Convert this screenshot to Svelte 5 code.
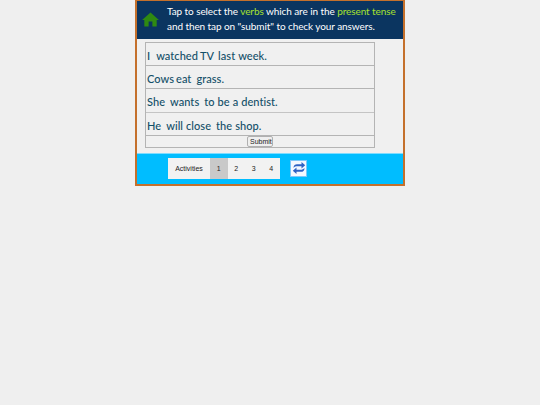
<script>
  const rows = [
    [['I', 6], ['watched', 2], ['TV', 4], ['last', 3], ['week.', 0]],
    [['Cows', 2], ['eat', 5], ['grass.', 0]],
    [['She', 5], ['wants', 5], ['to', 3], ['be', 3], ['a', 3], ['dentist.', 0]],
    [['He', 5], ['will', 3], ['close', 5], ['the', 3], ['shop.', 0]]
  ];
  const pages = ['1', '2', '3', '4'];
</script>

<div class="shell">
  <header class="head">
    <svg class="home" viewBox="0 0 18 16" width="17" height="15" aria-hidden="true">
      <path d="M9 0.5 L18 8.6 L15.6 8.6 L15.6 15.5 L11 15.5 L11 10.2 L7 10.2 L7 15.5 L2.4 15.5 L2.4 8.6 L0 8.6 Z" fill="#2f8a12" />
    </svg>
    <p class="intro">
      Tap to select the <b>verbs</b> which are in the <b>present tense</b><br />
      and then tap on "submit" to check your answers.
    </p>
  </header>

  <main class="body">
    <div class="table">
      {#each rows as row}
        <div class="row">
          {#each row as [word, gap]}<span class="word" style:margin-right="{gap}px">{word}</span>{/each}
        </div>
      {/each}
      <div class="submit-row"><button class="submit">Submit</button></div>
    </div>
  </main>

  <footer class="foot">
    <nav class="pager">
      <span class="label">Activities</span>
      {#each pages as p, i}
        <span class="page" class:active={i === 0}>{p}</span>
      {/each}
    </nav>
    <span class="refresh">
      <svg viewBox="0 0 14 14" width="14" height="14" aria-hidden="true">
        <path d="M1.5 7 C1.5 4 3.2 3.2 5 3.2 L9.5 3.2 L9.5 1 L13.2 4.3 L9.5 7.4 L9.5 5.3 L5.2 5.3 C4 5.3 2.6 5.6 1.5 7 Z" fill="#2f62c4" />
        <path d="M12.5 7 C12.5 10 10.8 10.8 9 10.8 L4.5 10.8 L4.5 13 L0.8 9.7 L4.5 6.6 L4.5 8.7 L8.8 8.7 C10 8.7 11.4 8.4 12.5 7 Z" fill="#2f62c4" />
      </svg>
    </span>
  </footer>
</div>

<style>
  :global(body) {
    margin: 0;
    background: #efefef;
  }
  .shell {
    box-sizing: border-box;
    width: 270px;
    height: 186px;
    margin-left: 135px;
    border: 2px solid #c4702c;
    border-top-width: 1px;
    display: flex;
    flex-direction: column;
    background: #f0f0f0;
  }
  .head {
    height: 38px;
    flex: none;
    background: #0b3560;
    display: flex;
    align-items: center;
    box-sizing: border-box;
    padding: 0 0 2px 5px;
  }
  .home {
    flex: none;
    margin-right: 8px;
  }
  .intro {
    margin: 0;
    color: #fff;
    font: 10px/15px "Lato", sans-serif;
    letter-spacing: -0.08px;
    white-space: nowrap;
  }
  .intro b {
    font-weight: 400;
    color: #a6e22e;
  }
  .body {
    flex: 1;
    padding: 3px 0 0 8px;
  }
  .table {
    box-sizing: border-box;
    width: 230px;
    border: 1px solid #b4b4b4;
  }
  .row {
    height: 23px;
    box-sizing: border-box;
    border-bottom: 1px solid #b4b4b4;
    padding: 2px 0 0 1px;
    display: flex;
    align-items: center;
    color: #134f68;
    font: 500 11px/1 "Lato", sans-serif;
    letter-spacing: 0.05px;
  }
  .row:nth-child(3) {
    height: 24px;
    border-bottom-color: #c4c4c4;
  }
  .submit-row {
    height: 11px;
    display: flex;
    justify-content: center;
    align-items: flex-start;
  }
  .submit {
    margin: 0;
    padding: 0 2px;
    width: 26px;
    height: 11px;
    box-sizing: border-box;
    border: 1px solid #b0b0b0;
    border-radius: 2px;
    background: #efefef;
    color: #222;
    font: 7px/9px "Liberation Sans", sans-serif;
  }
  .foot {
    flex: none;
    height: 31px;
    margin-top: auto;
    background: #00bdff;
    display: flex;
    align-items: center;
    padding: 0 0 2px 31px;
    border-top: 1px solid #7fdcff;
    box-sizing: border-box;
  }
  .pager {
    display: flex;
    height: 21px;
    background: #f2f2f2;
    font: 7px/21px "Liberation Sans", sans-serif;
    color: #222;
  }
  .label {
    width: 42px;
    text-align: center;
  }
  .page {
    width: 17.5px;
    text-align: center;
  }
  .active {
    background: #c9c9c9;
  }
  .refresh {
    margin-left: 10px;
    width: 17px;
    height: 17px;
    background: #f4f8ff;
    border: 1px solid #7cc8fa;
    box-sizing: border-box;
    display: flex;
    align-items: center;
    justify-content: center;
  }
</style>
